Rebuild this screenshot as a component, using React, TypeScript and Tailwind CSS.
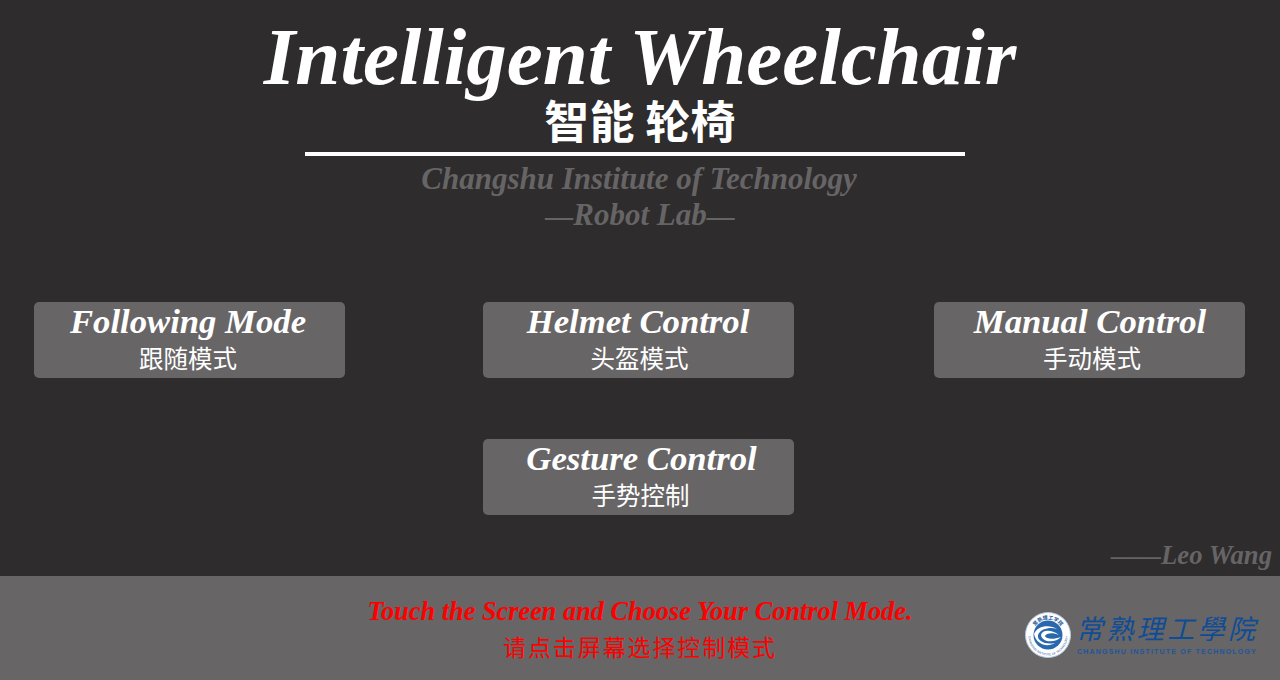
const serif = "font-['Liberation_Serif','Noto_Sans_CJK_SC',serif] font-bold italic";
const cjk = "font-['Noto_Sans_CJK_SC',sans-serif]";

function ModeButton({ en, zh, enShift, zhShift }: { en: string; zh: string; enShift: string; zhShift: string }) {
  return (
    <div className="flex h-[76px] w-[311px] flex-col items-center rounded-[5px] bg-[#686566]">
      <div className={`${serif} ${enShift} mt-[2px] h-[37px] text-[34.7px] leading-[36px] text-white`}>{en}</div>
      <div className={`${cjk} ${zhShift} h-[34px] text-[24.5px] leading-[34px] text-white`}>{zh}</div>
    </div>
  );
}

function Logo() {
  return (
    <div className="flex items-start gap-[6px]">
      <svg width="46" height="46" viewBox="0 0 46 46" className="mt-[1px]">
        <defs>
          <path id="top" d="M7.5 23 A15.5 15.5 0 0 1 38.5 23" />
          <path id="bot" d="M3.5 24 A19.5 19.5 0 0 0 42.5 24" />
        </defs>
        <circle cx="23" cy="23" r="22.5" fill="#ffffff" stroke="#b5c8de" strokeWidth="1" />
        <circle cx="23" cy="23" r="14.5" fill="#2a68ad" />
        <path d="M9 22 C12 14 24 12 32 17 C26 15 16 16 13 23 C12 29 20 33 30 31 C22 36 11 32 9 22 Z" fill="#ffffff" />
        <path d="M16 23 C17 18 26 17 34 23 C28 20 21 21 20 24 C21 27 28 28 36 25 C31 31 17 31 16 23 Z" fill="#ffffff" />
        <text fontSize="5" fontWeight="700" fill="#1a4f93" fontFamily="'Noto Sans CJK SC', sans-serif">
          <textPath href="#top" startOffset="50%" textAnchor="middle">常熟理工学院</textPath>
        </text>
        <text fontSize="3" fill="#1a4f93" fontFamily="'Liberation Sans', sans-serif">
          <textPath href="#bot" startOffset="50%" textAnchor="middle">CHANGSHU INSTITUTE OF TECHNOLOGY</textPath>
        </text>
      </svg>
      <div className="flex flex-col items-start">
        <div className={`${cjk} mt-[-3px] ml-[-1px] h-[40px] whitespace-nowrap text-[27px] italic leading-[40px] tracking-[3.4px] text-[#0f4c96]`}>常熟理工學院</div>
        <div className="whitespace-nowrap font-['Liberation_Sans',sans-serif] text-[7px] font-bold leading-[8px] tracking-[1.2px] text-[#1d569e]">CHANGSHU INSTITUTE OF TECHNOLOGY</div>
      </div>
    </div>
  );
}

export default function App() {
  return (
    <div className="flex h-[680px] w-[1280px] flex-col overflow-hidden bg-[#2e2c2d]">
      <header className="flex h-[302px] flex-col items-center">
        <h1 className={`${serif} mt-[19px] h-[76px] whitespace-nowrap text-[81px] leading-[76px] text-white`}>Intelligent Wheelchair</h1>
        <div className={`${cjk} mt-[2px] h-[46px] text-[45px] font-bold leading-[46px] tracking-[0.3px] text-white`}>智能 轮椅</div>
        <div className="mr-[10px] mt-[9px] h-[4px] w-[660px] bg-white" />
        <div className={`${serif} mr-[2px] mt-[5px] h-[36px] text-[31px] leading-[36px] text-[#666465]`}>Changshu Institute of Technology</div>
        <div className={`${serif} h-[36px] text-[31px] leading-[36px] text-[#666465]`}>
          <span className="text-[28px]">—</span>Robot Lab<span className="text-[28px]">—</span>
        </div>
      </header>
      <div className="flex h-[137px] items-start gap-[139px] pl-[34px]">
        <ModeButton en="Following Mode" zh="跟随模式" enShift="mr-[3px]" zhShift="mr-[3px]" />
        <div className="ml-[-1px]"><ModeButton en="Helmet Control" zh="头盔模式" enShift="mr-[1px]" zhShift="ml-[2px]" /></div>
        <div className="ml-[1px]"><ModeButton en="Manual Control" zh="手动模式" enShift="ml-[1px]" zhShift="ml-[5px]" /></div>
      </div>
      <div className="flex h-[100px] pl-[483px]">
        <ModeButton en="Gesture Control" zh="手势控制" enShift="ml-[6px]" zhShift="ml-[4px]" />
      </div>
      <div className="flex h-[37px] items-start justify-end pr-[8px] pt-[1px]">
        <div className={`${serif} text-[26.7px] leading-[30px] text-[#666465]`}>
          <span className="text-[25px]">——</span>Leo Wang
        </div>
      </div>
      <footer className="relative flex h-[104px] flex-col items-center bg-[#686566]">
        <div className={`${serif} mt-[21px] h-[30px] text-[26.3px] leading-[30px] text-[#ff0000]`}>Touch the Screen and Choose Your Control Mode.</div>
        <div className={`${cjk} mt-[4px] h-[30px] text-[23px] leading-[30px] tracking-[1.9px] text-[#ff0000]`}>请点击屏幕选择控制模式</div>
        <div className="absolute left-[1025px] top-[35px]"><Logo /></div>
      </footer>
    </div>
  );
}
